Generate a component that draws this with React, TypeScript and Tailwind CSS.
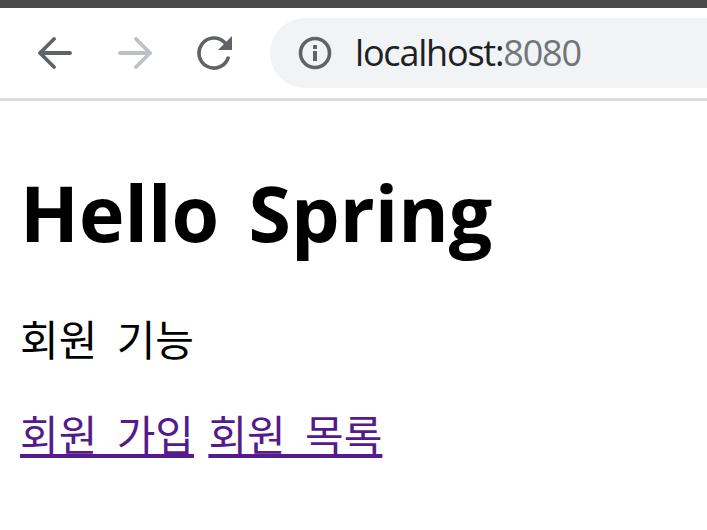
import React from "react";

const App: React.FC = () => {
  return (
    <div className="w-[707px] h-[530px] overflow-hidden bg-white flex flex-col font-['Noto_Sans_CJK_KR','Noto_Sans',sans-serif]">
      <div className="h-2 bg-[#4a4a4a]" />
      <div className="h-[93px] flex items-center border-b-[3px] border-[#dadce0] pl-[38px]">
        <svg width="34" height="32" viewBox="0 0 34 32" fill="none" stroke="#5f6368" strokeWidth="3.8" strokeLinecap="round" strokeLinejoin="round">
          <path d="M32 16H2M16 2 2 16l14 14" />
        </svg>
        <svg className="ml-[46px]" width="34" height="32" viewBox="0 0 34 32" fill="none" stroke="#bdc1c6" strokeWidth="3.8" strokeLinecap="round" strokeLinejoin="round">
          <path d="M2 16h30M18 2l14 14-14 14" />
        </svg>
        <svg className="ml-[45px]" width="36" height="36" viewBox="0 0 36 36" fill="none">
          <path d="M27.6 7.4A15 15 0 1 0 31.1 23.1" stroke="#5f6368" strokeWidth="3.6" strokeLinecap="round" />
          <path d="M35 1v14H21z" fill="#5f6368" />
        </svg>
        <div className="ml-[37px] h-[70px] flex-1 rounded-l-[35px] bg-[#f1f3f4] flex items-center pl-[28px] -mt-px">
          <svg width="34" height="34" viewBox="0 0 34 34" fill="none">
            <circle cx="17" cy="17" r="14.5" stroke="#5f6368" strokeWidth="3.6" />
            <rect x="15" y="15" width="4" height="10" fill="#5f6368" />
            <rect x="15" y="9" width="4" height="4" fill="#5f6368" />
          </svg>
          <div className="ml-[23px] text-[36px] leading-none tracking-[-1.2px] font-['Open_Sans',sans-serif] text-[#202124]">
            localhost:<span className="text-[#70757a]">8080</span>
          </div>
        </div>
      </div>
      <div className="pl-[20px] text-black">
        <h1 className="mt-[67px] text-[77px] leading-[90px] font-bold [word-spacing:9.5px] font-['Open_Sans','Noto_Sans_CJK_KR',sans-serif]">Hello Spring</h1>
        <p className="mt-[50px] text-[42px] leading-[60px] [word-spacing:10px]">회원 기능</p>
        <p className="mt-[35px] text-[42px] leading-[60px] text-[#551a8b] [word-spacing:5px]">
          <a href="#" className="underline [word-spacing:10px]">회원 가입</a> <a href="#" className="underline [word-spacing:10px]">회원 목록</a>
        </p>
      </div>
    </div>
  );
};

export default App;
